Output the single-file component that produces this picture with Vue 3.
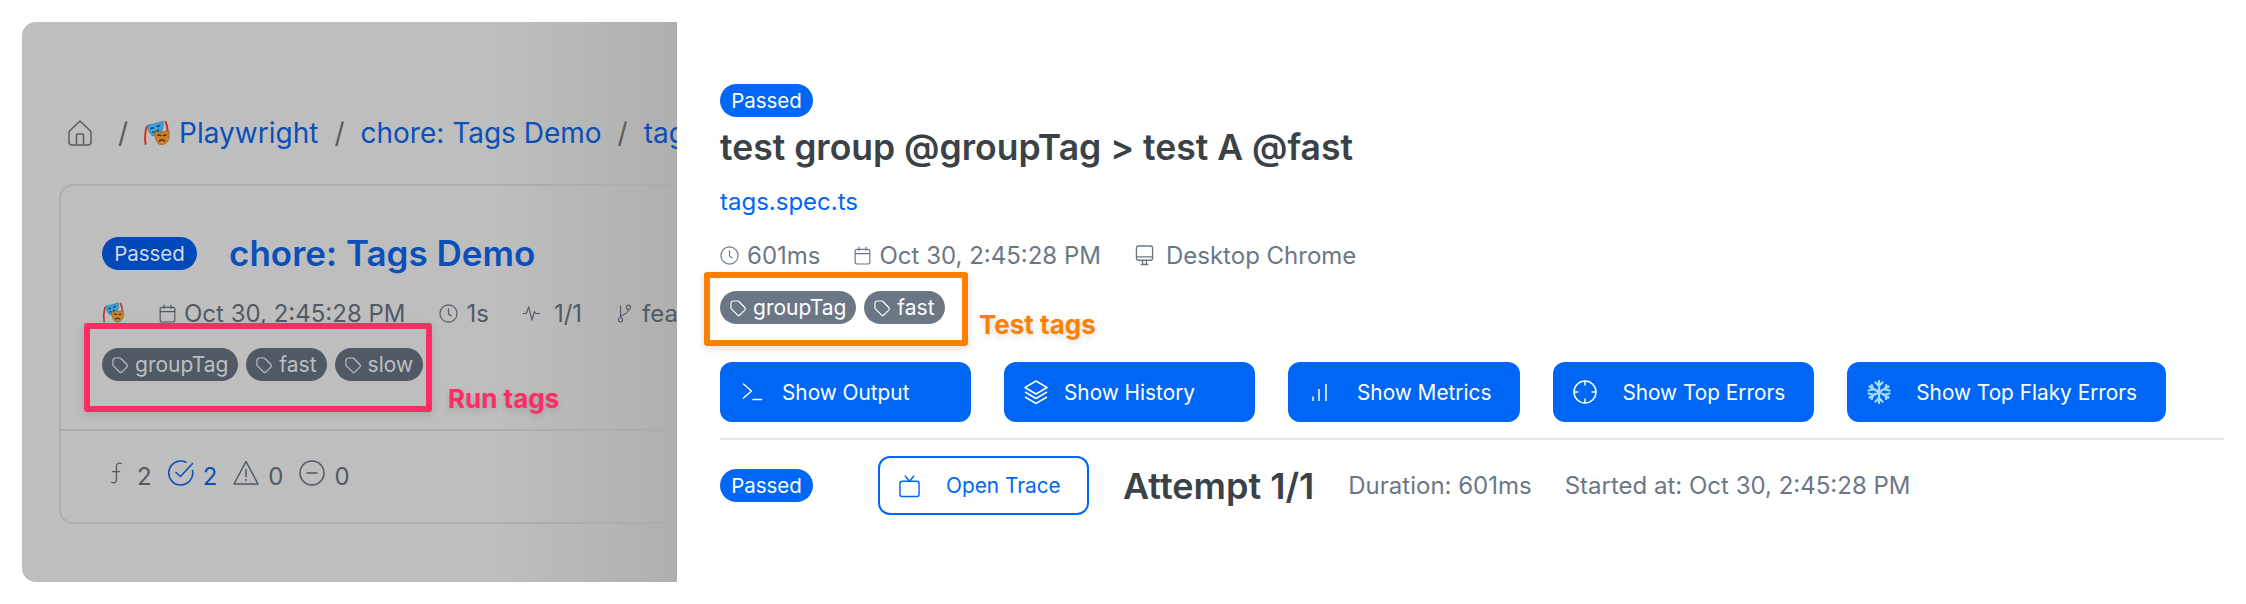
<template>
  <div class="page">
    <svg class="defs" width="0" height="0" aria-hidden="true">
      <symbol id="tag" viewBox="0 0 24 24">
        <path d="M3.500 6.500v5.200a2 2 0 0 0 .6 1.400l7.200 7.200a2.200 2.200 0 0 0 3.100 0l5.800-5.800a2.200 2.200 0 0 0 0-3.100L13 4.200a2 2 0 0 0-1.400-.6H6.400a2.900 2.900 0 0 0-2.900 2.900z" fill="none" stroke="currentColor" stroke-width="1.400" stroke-linejoin="round" />
      </symbol>
      <symbol id="clock" viewBox="0 0 24 24">
        <circle cx="12" cy="12" r="10.800" fill="none" stroke="currentColor" stroke-width="1.500" />
        <path d="M12 6v6.500l3.500 2.500" fill="none" stroke="currentColor" stroke-width="1.500" stroke-linecap="round" stroke-linejoin="round" />
      </symbol>
      <symbol id="calendar" viewBox="0 0 22 24">
        <rect x="1.500" y="4" width="19" height="19" rx="2.500" fill="none" stroke="currentColor" stroke-width="1.500" />
        <path d="M1.500 9.500h19M6.500 1v4.500M15.500 1v4.500" fill="none" stroke="currentColor" stroke-width="1.500" stroke-linecap="round" />
      </symbol>
      <symbol id="mask" viewBox="0 0 28 24">
        <path d="M3.500 6C2.200 11 1.600 17 2.600 23" fill="none" stroke="#c9331f" stroke-width="2" stroke-linecap="round" />
        <path d="M22.600 1c1.600 3.500 2.200 6.500 2 10" fill="none" stroke="#c9331f" stroke-width="2" stroke-linecap="round" />
        <path d="M4.500 4c4-.3 10-2 15.500-3.800.6 4.500.2 8.600-2.200 11.500-2.200 2.600-5.300 3.600-7.800 3C7 13.800 4.800 9 4.500 4z" fill="#3f9fd6" stroke="#2a6f9c" stroke-width=".6" />
        <path d="M8 7.500l2.500-.6M14 5.700l2.500-1" stroke="#123a58" stroke-width="1.300" stroke-linecap="round" />
        <path d="M9.500 11c2 .8 4.500 0 6-2" fill="none" stroke="#123a58" stroke-width="1.300" stroke-linecap="round" />
        <path d="M11.500 10.500c4.500.8 9.500.6 14.500-.8.700 5 .2 9.300-2 11.500-2 2-4.500 2.800-6.500 2.600-3.500-.6-6-6.800-6-13.300z" fill="#c8812f" stroke="#8f5a1e" stroke-width=".6" />
        <path d="M15 14l2.600.5M20.500 14.500l2.500-.5" stroke="#4d2b0c" stroke-width="1.300" stroke-linecap="round" />
        <path d="M16.500 20c1.500-1.600 3.500-1.600 5 0" fill="none" stroke="#4d2b0c" stroke-width="1.300" stroke-linecap="round" />
      </symbol>
    </svg>

    <div class="scrim">
      <nav class="crumbs">
        <svg class="home" viewBox="0 0 24 26" fill="none" stroke="currentColor" stroke-width="1.500" stroke-linejoin="round">
          <path d="M1 11.500L12 1l11 10.500V22a3 3 0 0 1-3 3H4a3 3 0 0 1-3-3z" />
          <path d="M8.500 25V15a1 1 0 0 1 1-1h5a1 1 0 0 1 1 1v10" />
        </svg>
        <span class="sep first">/</span>
        <svg class="mask-big"><use href="#mask" /></svg>
        <a class="crumb">Playwright</a>
        <span class="sep">/</span>
        <a class="crumb">chore: Tags Demo</a>
        <span class="sep">/</span>
        <a class="crumb">tags.spec.ts</a>
      </nav>

      <section class="card">
        <div class="card-body">
          <div class="card-head">
            <span class="pill pill-dim">Passed</span>
            <a class="card-title">chore: Tags Demo</a>
          </div>
          <div class="card-meta">
            <svg class="mask-small"><use href="#mask" /></svg>
            <span class="mi cal"><svg class="ico"><use href="#calendar" /></svg>Oct 30, 2:45:28 PM</span>
            <span class="mi"><svg class="ico clock"><use href="#clock" /></svg>1s</span>
            <span class="mi pulse">
              <svg class="ico" viewBox="0 0 18 18" fill="none" stroke="currentColor" stroke-width="1.200" stroke-linejoin="round"><path d="M0 9h3.500L6 2l3.500 14L12 7l1.500 2H18" /></svg>
              1/1
            </span>
            <span class="mi branch">
              <svg class="ico" viewBox="0 0 18 24" fill="none" stroke="currentColor" stroke-width="1.400"><circle cx="4" cy="20" r="2.600" /><circle cx="14" cy="4" r="2.600" /><path d="M4 17V2M14 7c0 5-6 5-9.500 9" /></svg>
              feat/tags
            </span>
          </div>
          <div class="tags">
            <span v-for="t in runTags" :key="t" class="tag tag-dim"><svg class="tag-ico"><use href="#tag" /></svg>{{ t }}</span>
          </div>
        </div>
        <div class="stats">
          <span class="stat">
            <svg class="stat-ico fn" viewBox="0 0 14 26" fill="none" stroke="currentColor" stroke-width="1.500" stroke-linecap="round"><path d="M13 2c-3.500-1.500-5.500 0-5.500 3.500v15c0 3.500-2.500 4.500-5.500 3.500M3 11.500h8" /></svg>
            2
          </span>
          <span class="stat ok">
            <svg class="stat-ico" viewBox="0 0 26 26" fill="none" stroke="currentColor" stroke-width="1.600" stroke-linecap="round" stroke-linejoin="round"><path d="M24.500 10.500A12 12 0 1 1 18 2.200" /><path d="M8 12.500l4.500 4L24.500 3.500" /></svg>
            2
          </span>
          <span class="stat">
            <svg class="stat-ico" viewBox="0 0 26 26" fill="none" stroke="currentColor" stroke-width="1.500" stroke-linejoin="round"><path d="M13 1.500L25 24H1z" /><path d="M13 9.500v7M13 19.500v.8" stroke-linecap="round" /></svg>
            0
          </span>
          <span class="stat">
            <svg class="stat-ico" viewBox="0 0 26 26" fill="none" stroke="currentColor" stroke-width="1.500" stroke-linecap="round"><circle cx="13" cy="13" r="12" /><path d="M8 13h10" /></svg>
            0
          </span>
        </div>
      </section>

      <div class="mark mark-run"></div>
      <span class="mark-label label-run">Run tags</span>
    </div>

    <aside class="drawer">
      <span class="pill pill-live">Passed</span>
      <h1 class="title">test group @groupTag &gt; test A @fast</h1>
      <a class="file">tags.spec.ts</a>
      <div class="meta">
        <span class="mi"><svg class="ico clock"><use href="#clock" /></svg>601ms</span>
        <span class="mi"><svg class="ico"><use href="#calendar" /></svg>Oct 30, 2:45:28 PM</span>
        <span class="mi device">
          <svg class="ico wide" viewBox="0 0 20 22" fill="none" stroke="currentColor" stroke-width="1.400" stroke-linejoin="round"><rect x="1.500" y="1" width="17" height="15" rx="2" /><path d="M1.500 12.500h17M6 20.500h8M8 16v4.500M12 16v4.500" /></svg>
          Desktop Chrome
        </span>
      </div>
      <div class="tags test-tags">
        <span v-for="t in testTags" :key="t" class="tag tag-live"><svg class="tag-ico"><use href="#tag" /></svg>{{ t }}</span>
        <div class="mark mark-test"></div>
        <span class="mark-label label-test">Test tags</span>
      </div>

      <div class="actions">
        <button class="btn">
          <svg class="btn-ico nudge" viewBox="0 0 24 24" fill="none" stroke="currentColor" stroke-width="1.500" stroke-linecap="round" stroke-linejoin="round"><path d="M1.500 4l8 7-8 7M11 19.500h8.500" /></svg>
          Show Output
        </button>
        <button class="btn">
          <svg class="btn-ico" viewBox="0 0 24 24" fill="none" stroke="currentColor" stroke-width="1.500" stroke-linejoin="round"><path d="M12 1l11 6.500L12 14 1 7.500z" /><path d="M1 12l11 6.500L23 12M1 17l11 6.500L23 17" /></svg>
          Show History
        </button>
        <button class="btn far">
          <svg class="btn-ico" viewBox="0 0 24 24" fill="none" stroke="currentColor" stroke-width="1.500"><path d="M5 21v-4.500M11 21V9M18 21V4" /></svg>
          Show Metrics
        </button>
        <button class="btn far">
          <svg class="btn-ico" viewBox="0 0 24 24" fill="none" stroke="currentColor" stroke-width="1.500"><circle cx="12" cy="12" r="11" /><path d="M12 1v4.500M12 18.500V23M1 12h4.500M18.500 12H23" /></svg>
          Show Top Errors
        </button>
        <button class="btn far">
          <svg class="btn-ico" viewBox="0 0 24 24" fill="none" stroke="#a6dcfa" stroke-width="2.200" stroke-linecap="round"><path d="M12 1v22M2.500 6.500l19 11M21.500 6.500l-19 11M8.500 2.500L12 6l3.500-3.500M8.500 21.500L12 18l3.500 3.500M1.500 10.500L6 9.500 4.800 5M22.500 10.500L18 9.500 19.200 5M1.500 13.500L6 14.500 4.800 19M22.500 13.500L18 14.500 19.200 19" /></svg>
          Show Top Flaky Errors
        </button>
      </div>

      <div class="attempt">
        <span class="pill pill-live">Passed</span>
        <button class="trace">
          <svg class="trace-ico" viewBox="0 0 24 24" fill="none" stroke="currentColor" stroke-width="1.500" stroke-linecap="round" stroke-linejoin="round"><rect x="2" y="7" width="20" height="16" rx="2.500" /><path d="M7.500 1.500L12 7l4.500-5.500" /></svg>
          Open Trace
        </button>
        <h2 class="attempt-title">Attempt 1/1</h2>
        <span class="attempt-info">Duration: 601ms</span>
        <span class="attempt-info">Started at: Oct 30, 2:45:28 PM</span>
      </div>
    </aside>
  </div>
</template>

<script setup>
const runTags = ['groupTag', 'fast', 'slow']
const testTags = ['groupTag', 'fast']
</script>

<style scoped>
.page {
  display: flex;
  width: 2246px;
  height: 604px;
  overflow: hidden;
  background: #fff;
  font-family: Inter, "Liberation Sans", sans-serif;
}

.defs {
  position: absolute;
}

/* dimmed report behind the drawer */
.scrim {
  position: relative;
  flex: none;
  width: 655px;
  height: 560px;
  margin: 22px 0 0 22px;
  padding: 94px 0 0 46px;
  box-sizing: border-box;
  overflow: hidden;
  border-radius: 14px 0 0 14px;
  background: linear-gradient(90deg, rgba(0, 0, 0, 0) 72%, rgba(0, 0, 0, 0.08) 100%), #bebebe;
}

.crumbs {
  display: flex;
  align-items: center;
  height: 34px;
  font-size: 28px;
  white-space: nowrap;
  color: #0a50b8;
}

.home {
  flex: none;
  width: 24px;
  height: 26px;
  color: #5c5c5c;
}

.sep {
  margin: 0 16px;
  color: #5c5c5c;
  font-size: 28px;
}

.sep.first {
  margin: 0 15px 0 26px;
}

.mask-big {
  flex: none;
  width: 28px;
  height: 24px;
  margin-right: 8px;
}

.mask-small {
  flex: none;
  width: 23px;
  height: 21px;
  margin-right: 34px;
  margin-top: -2px;
}

.card {
  width: 900px;
  height: 340px;
  margin: 34px 0 0 -9px;
  box-sizing: border-box;
  border: 2px solid #adadad;
  border-radius: 14px;
}

.card-body {
  height: 245px;
  padding: 51px 0 0 41px;
  box-sizing: border-box;
  border-bottom: 2px solid #adadad;
}

.card-head {
  display: flex;
  align-items: center;
  gap: 32px;
}

.card-title {
  font-size: 35px;
  font-weight: 600;
  line-height: 33px;
  color: #0a50b8;
}

.pill {
  display: inline-flex;
  flex: none;
  align-items: center;
  justify-content: center;
  box-sizing: border-box;
  height: 33px;
  border-radius: 17px;
  font-size: 20.5px;
}

.pill-dim {
  width: 95px;
  background: #0049b8;
  color: #d2d7e0;
}

.pill-live {
  width: 93px;
  background: #0066f5;
  color: #fff;
}

.card-meta {
  display: flex;
  align-items: center;
  height: 30px;
  margin-top: 28px;
  font-size: 24px;
  color: #515a64;
  white-space: nowrap;
}

.card-meta .mi {
  margin-right: 34px;
}

.mi {
  display: inline-flex;
  align-items: center;
  gap: 8px;
  white-space: nowrap;
}

.ico {
  flex: none;
  width: 17px;
  height: 19px;
}

.ico.clock {
  width: 19px;
}

.pulse {
  gap: 14px;
}

.branch {
  gap: 9px;
}

.tags {
  display: flex;
  gap: 8px;
  margin-top: 20px;
}

.tag {
  display: inline-flex;
  align-items: center;
  gap: 5px;
  height: 33px;
  padding: 0 10px 0 8px;
  border-radius: 17px;
  font-size: 21px;
}

.tag-dim {
  background: #515a64;
  color: #bcc0c4;
}

.tag-live {
  background: #6b7785;
  color: #fff;
}

.tag-ico {
  flex: none;
  width: 20px;
  height: 20px;
}

.stats {
  display: flex;
  gap: 16px;
  padding: 31px 0 0 49px;
  font-size: 24px;
  color: #515a64;
}

.stat {
  display: inline-flex;
  align-items: flex-start;
  gap: 9px;
  line-height: 30px;
}

.stat.ok {
  color: #0a50b8;
}

.stat-ico {
  flex: none;
  width: 26px;
  height: 26px;
  margin-top: -2px;
}

.stat-ico.fn {
  width: 12px;
  margin-right: 6px;
}

.mark {
  position: absolute;
  box-sizing: border-box;
  border-radius: 3px;
  border-style: solid;
  border-width: 6px;
  box-shadow: 0 3px 8px rgba(0, 0, 0, 0.12);
}

.mark-label {
  position: absolute;
  font-size: 26px;
  font-weight: 700;
  line-height: 30px;
  white-space: nowrap;
  text-shadow: 0 3px 6px rgba(0, 0, 0, 0.14);
}

.mark-run {
  left: 62px;
  top: 301px;
  width: 348px;
  height: 89px;
  border-color: #ff2d63;
}

.label-run {
  left: 426px;
  top: 362px;
  color: #ff2d63;
}

.drawer {
  flex: 1;
  min-width: 0;
  padding: 84px 22px 0 43px;
  background: #fff;
  color: #3a4147;
}

.title {
  margin: 11px 0 0;
  font-size: 35.5px;
  font-weight: 600;
  line-height: 40px;
  white-space: nowrap;
}

.file {
  display: block;
  margin-top: 19px;
  font-size: 24px;
  line-height: 30px;
  color: #0066f5;
}

.meta {
  display: flex;
  gap: 34px;
  margin-top: 23px;
  height: 30px;
  align-items: center;
  font-size: 24px;
  color: #6b7785;
}

.device {
  gap: 12px;
}

.ico.wide {
  width: 19px;
  height: 21px;
}

.test-tags {
  position: relative;
  margin-top: 21px;
}

.mark-test {
  left: -16px;
  top: -19px;
  width: 264px;
  height: 74px;
  border-color: #ff7f00;
}

.label-test {
  left: 259px;
  top: 19px;
  color: #ff7f00;
}

.actions {
  display: flex;
  gap: 33px;
  margin-top: 38px;
  padding-bottom: 16px;
  border-bottom: 2px solid #e5e5e5;
}

.btn {
  display: inline-flex;
  align-items: center;
  gap: 16px;
  box-sizing: border-box;
  min-width: 251px;
  height: 60px;
  padding: 0 29px 0 20px;
  border: 0;
  border-radius: 12px;
  background: #0066f5;
  color: #fff;
  font-family: inherit;
  font-size: 20.8px;
  white-space: nowrap;
}

.btn.far {
  min-width: 0;
  gap: 25px;
}

.btn-ico {
  flex: none;
  width: 24px;
  height: 24px;
}

.btn-ico.nudge {
  margin-left: 2px;
}

.attempt {
  display: flex;
  align-items: center;
  height: 59px;
  margin-top: 16px;
}

.trace {
  display: inline-flex;
  align-items: center;
  gap: 25px;
  box-sizing: border-box;
  width: 211px;
  height: 59px;
  margin: 0 34px 0 65px;
  padding: 0 0 0 18px;
  border: 2px solid #0066f5;
  border-radius: 12px;
  background: #fff;
  color: #0066f5;
  font-family: inherit;
  font-size: 20.8px;
}

.trace-ico {
  flex: none;
  width: 23px;
  height: 24px;
}

.attempt-title {
  margin: 0 34px 0 0;
  font-size: 36px;
  font-weight: 600;
  white-space: nowrap;
}

.attempt-info {
  margin-right: 33px;
  font-size: 24px;
  color: #6b7785;
  white-space: nowrap;
}
</style>
